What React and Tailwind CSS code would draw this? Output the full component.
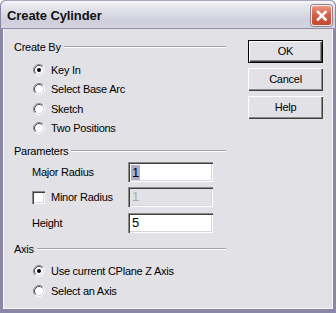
import React from 'react';

const RadioMark = ({ checked }) => (
  <svg width="12" height="12" viewBox="0 0 12 12" className="shrink-0">
    <circle cx="6" cy="6" r="4.2" fill="#fff" />
    <path d="M2.11 9.89 A5.5 5.5 0 0 1 9.89 2.11" fill="none" stroke="#8a8a8a" strokeWidth="1" />
    <path d="M9.89 2.11 A5.5 5.5 0 0 1 2.11 9.89" fill="none" stroke="#ffffff" strokeWidth="1" />
    <path d="M2.82 9.18 A4.5 4.5 0 0 1 9.18 2.82" fill="none" stroke="#505050" strokeWidth="1" />
    <path d="M9.18 2.82 A4.5 4.5 0 0 1 2.82 9.18" fill="none" stroke="#d8d6dc" strokeWidth="1" />
    {checked && <circle cx="6" cy="6" r="2" fill="#000" />}
  </svg>
);

const Radio = ({ label, checked, tall }) => (
  <div className={`flex items-center pl-[19px] ${tall ? 'h-[20px]' : 'h-[19.5px]'}`}>
    <RadioMark checked={checked} />
    <span className="ml-[6px]">{label}</span>
  </div>
);

const GroupTitle = ({ title, className = '' }) => (
  <div className={`flex h-[14px] items-center ${className}`}>
    <span>{title}</span>
    <div className="ml-[3px] h-0 flex-1 border-t border-b border-t-[#a2a1aa] border-b-white" />
  </div>
);

const sunken =
  'shadow-[inset_1px_1px_#8a8a8a,inset_2px_2px_#404040,inset_-1px_-1px_#ffffff,inset_-2px_-2px_#d8d6dc]';

const Field = ({ value, disabled, selected }) => (
  <div
    className={`flex h-[20px] w-[85px] items-center pl-[3px] text-[13px] tracking-normal ${sunken} ${
      disabled ? 'bg-[#e2e1e6] text-[#a9aaa2]' : 'bg-white text-black'
    }`}
  >
    {selected ? (
      <span className="bg-[#aeaec4] px-[1px] leading-[15px]">{value}</span>
    ) : (
      <span className="pl-[1px]">{value}</span>
    )}
  </div>
);

const Button = ({ children, isDefault, className = '' }) => (
  <div
    className={`flex h-[23px] w-[75px] items-center justify-center ${
      isDefault
        ? 'border border-black shadow-[inset_1px_1px_#ffffff,inset_-1px_-1px_#404040,inset_-2px_-2px_#8a8a8a]'
        : 'shadow-[inset_1px_1px_#ffffff,inset_-1px_-1px_#404040,inset_-2px_-2px_#8a8a8a]'
    } ${className}`}
  >
    {children}
  </div>
);

export default function App() {
  return (
    <div className="h-[313px] w-[336px] bg-white font-['Liberation_Sans',Arial,sans-serif] text-[11px] tracking-[-0.25px] text-black">
      <div className="flex h-full flex-col">
        {/* title bar */}
        <div className="flex h-[29px] shrink-0 items-center justify-between rounded-t-[6px] border-b border-[#8e8ca6] bg-[linear-gradient(to_bottom,#fdfdff_0%,#ebebf1_14%,#dcdce6_45%,#cfcfdc_75%,#d6d6e2_100%)] pl-[7px] pr-[4px] pt-[3px] shadow-[inset_1px_0_#8784a4,inset_-1px_0_#8784a4,inset_0_1px_#a8a6bc]">
          <span className="text-[13px] font-bold tracking-[-0.1px] text-[#111]">Create Cylinder</span>
          <div className="flex h-[21px] w-[21px] items-center justify-center rounded-[3px] border border-[#f4f2f2] bg-[linear-gradient(to_bottom,#ec9a86,#d5604a_45%,#c4462f)] shadow-[0_0_0_1px_#9a7f86]">
            <svg width="21" height="21" viewBox="0 0 21 21" className="-m-px">
              <path d="M7 7 L14.5 14.5 M14.5 7 L7 14.5" stroke="#fff" strokeWidth="2.6" strokeLinecap="square" />
            </svg>
          </div>
        </div>

        {/* body */}
        <div className="flex flex-1 border-x-[3px] border-b-[4px] border-[#8a88a6] bg-[#e2e1e6] pt-[11px] shadow-[inset_1px_0_#f6f6f8,inset_-1px_-1px_#f6f6f8]">
          <div className="flex w-[223px] flex-col pl-[11px]">
            <GroupTitle title="Create By" />
            <div className="mt-[6px]">
              <Radio label="Key In" checked />
              <Radio label="Select Base Arc" />
              <Radio label="Sketch" />
              <Radio label="Two Positions" />
            </div>

            <GroupTitle title="Parameters" className="mt-[6px]" />
            <div className="mt-[4px] flex items-center pl-[18px]">
              <span className="w-[96px]">Major Radius</span>
              <Field value="1" selected />
            </div>
            <div className="mt-[5px] flex items-center pl-[18px]">
              <div className="flex w-[96px] items-center">
                <div className={`h-[13px] w-[13px] bg-white ${sunken}`} />
                <span className="ml-[6px]">Minor Radius</span>
              </div>
              <Field value="1" disabled />
            </div>
            <div className="mt-[6px] flex items-center pl-[18px]">
              <span className="w-[96px]">Height</span>
              <Field value="5" />
            </div>

            <GroupTitle title="Axis" className="mt-[9px]" />
            <div className="mt-[5px]">
              <Radio label="Use current CPlane Z Axis" checked tall />
              <Radio label="Select an Axis" tall />
            </div>
          </div>

          <div className="ml-[22px] flex flex-col gap-[5px]">
            <Button isDefault>OK</Button>
            <Button>Cancel</Button>
            <Button>Help</Button>
          </div>
        </div>
      </div>
    </div>
  );
}
